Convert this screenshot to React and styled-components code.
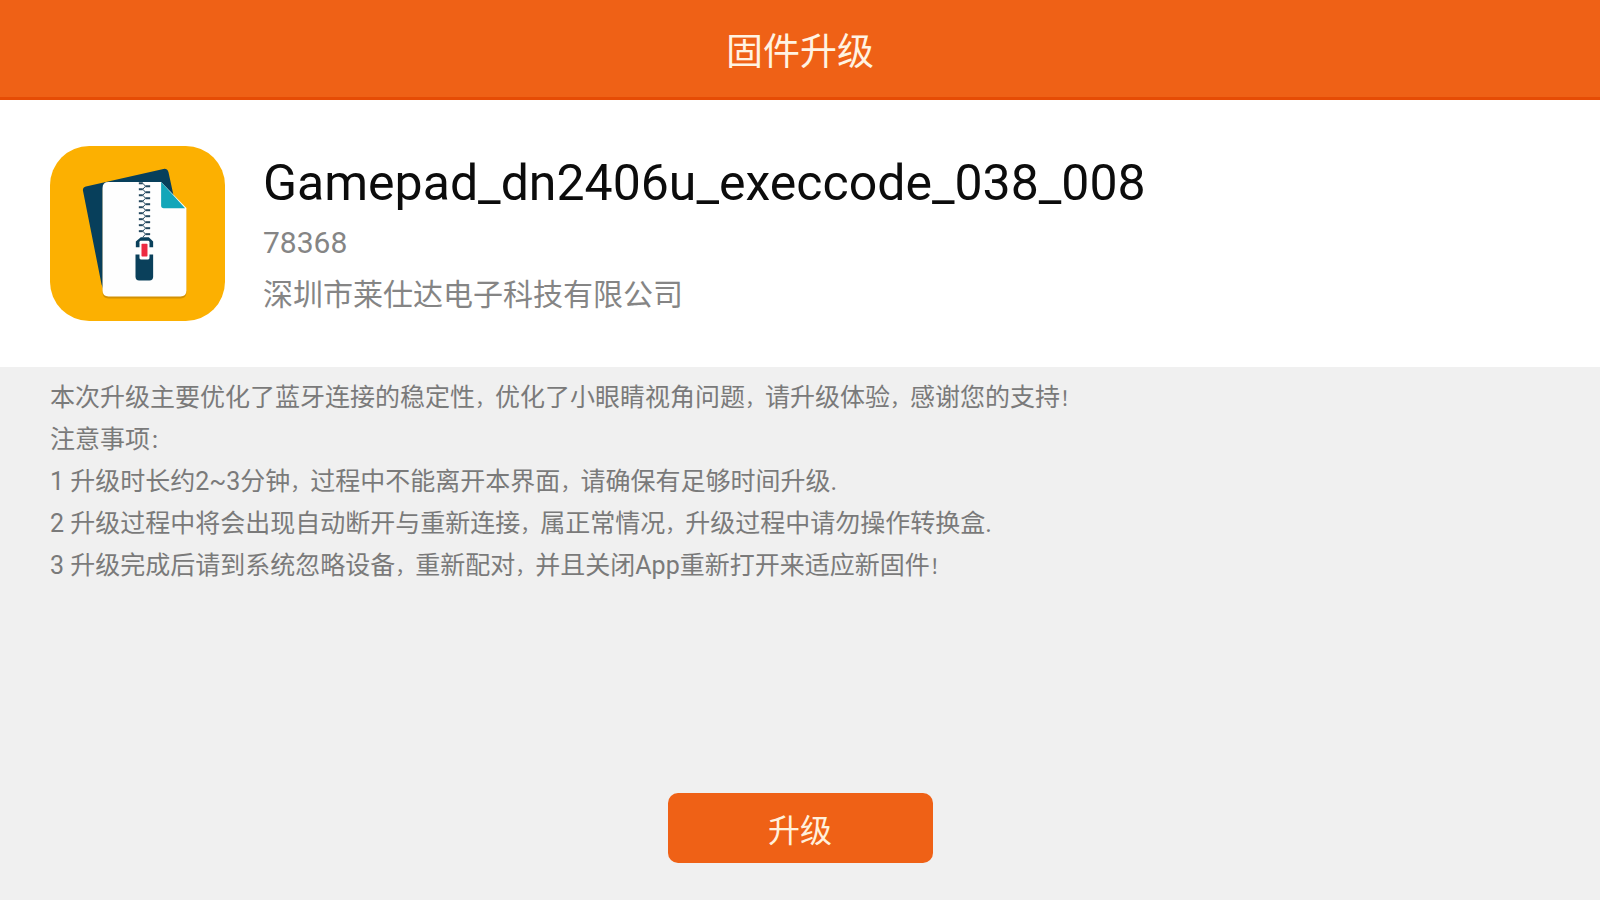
import React from 'react';
import styled, { createGlobalStyle } from 'styled-components';

const GlobalStyle = createGlobalStyle`
  * {
    box-sizing: border-box;
  }
  body {
    margin: 0;
    background: #f0f0f0;
    font-family: Roboto, 'Noto Sans CJK SC', sans-serif;
  }
`;

const Page = styled.div`
  display: flex;
  flex-direction: column;
  min-height: 100vh;
`;

const Header = styled.header`
  display: flex;
  align-items: center;
  justify-content: center;
  height: 100px;
  padding-top: 8px;
  background: #ef6116;
  border-bottom: 3px solid #e64c05;

  h1 {
    margin: 0;
    font-size: 37px;
    font-weight: 400;
    line-height: 56px;
    color: #fff3e2;
  }
`;

const FirmwareBlock = styled.section`
  display: flex;
  align-items: center;
  gap: 38px;
  padding: 46px 50px;
  background: #fff;

  svg {
    flex: none;
    width: 175px;
    height: 175px;
  }
`;

const FirmwareInfo = styled.div`
  padding-top: 2px;

  h2 {
    margin: 0;
    font-size: 50px;
    font-weight: 400;
    line-height: 68px;
    color: #0c0c0c;
  }
  p {
    margin: 0;
    font-size: 30px;
    line-height: 52px;
    color: #858585;
  }
`;

const Notes = styled.section`
  flex: 1;
  padding: 10px 50px;

  p {
    margin: 0;
    font-size: 25px;
    line-height: 42px;
    color: #7a7a7a;
  }
`;

const Mark = styled.span`
  font-size: 20px;
  line-height: 1;
`;

const Footer = styled.footer`
  display: flex;
  justify-content: center;
  padding: 0 50px 37px;
`;

const UpgradeButton = styled.button`
  min-width: 265px;
  height: 70px;
  border: none;
  border-radius: 10px;
  background: #ef6116;
  font-family: inherit;
  font-size: 32px;
  color: #fff0dc;
  cursor: pointer;
`;

const notes = [
  '本次升级主要优化了蓝牙连接的稳定性，优化了小眼睛视角问题，请升级体验，感谢您的支持！',
  '注意事项：',
  '1 升级时长约2~3分钟，过程中不能离开本界面，请确保有足够时间升级.',
  '2 升级过程中将会出现自动断开与重新连接，属正常情况，升级过程中请勿操作转换盒.',
  '3 升级完成后请到系统忽略设备，重新配对，并且关闭App重新打开来适应新固件！',
];

// full-width punctuation is set one step smaller than the text around it
function NoteLine({ text }) {
  return (
    <p>
      {text.split(/([，：！])/).map((part, i) => (i % 2 ? <Mark key={i}>{part}</Mark> : part))}
    </p>
  );
}

function ZipIcon() {
  const teeth = Array.from({ length: 9 }, (_, i) => 112 + i * 18);

  return (
    <svg viewBox="0 0 526 526" aria-hidden="true">
      <rect width="526" height="526" rx="118" fill="#fcb001" />
      <path d="M108 122 L341 69 Q352 67 356 78 L404 300 L160 430 L155 416 L99 134 Q98 124 108 122Z" fill="#073f5b" />
      <path
        d="M176 114 H334 L410 190 V440 Q410 458 392 458 H176 Q158 458 158 440 V132 Q158 114 176 114Z"
        fill="#b87d05"
        opacity="0.6"
      />
      <path d="M176 108 H334 L410 186 V434 Q410 452 392 452 H176 Q158 452 158 434 V126 Q158 108 176 108Z" fill="#fefefe" />
      <path d="M334 108 L406 187 H342 Q334 187 334 179Z" fill="#13a6b9" />
      {teeth.map((y) => (
        <g key={y} stroke="#24485f" fill="none">
          <path d={`M267 ${y} H279`} strokeWidth="6" />
          <path d={`M287 ${y + 9} H301`} strokeWidth="6" />
          <path d={`M279 ${y} L287 ${y + 9} L279 ${y + 18}`} strokeWidth="3" />
        </g>
      ))}
      <path d="M273 274 H297 L310 287 V304 H258 V287Z" fill="#0a405b" />
      <path d="M257 326 H310 V393 Q310 404 299 404 H268 Q257 404 257 393Z" fill="#0a405b" />
      <rect x="269" y="285" width="30" height="56" rx="4" fill="#fff" />
      <rect x="275" y="294" width="18" height="38" rx="2" fill="#ed2b42" />
    </svg>
  );
}

export default function App() {
  return (
    <>
      <GlobalStyle />
      <Page>
        <Header>
          <h1>固件升级</h1>
        </Header>
        <FirmwareBlock>
          <ZipIcon />
          <FirmwareInfo>
            <h2>Gamepad_dn2406u_execcode_038_008</h2>
            <p>78368</p>
            <p>深圳市莱仕达电子科技有限公司</p>
          </FirmwareInfo>
        </FirmwareBlock>
        <Notes>
          {notes.map((text) => (
            <NoteLine key={text} text={text} />
          ))}
        </Notes>
        <Footer>
          <UpgradeButton type="button">升级</UpgradeButton>
        </Footer>
      </Page>
    </>
  );
}
